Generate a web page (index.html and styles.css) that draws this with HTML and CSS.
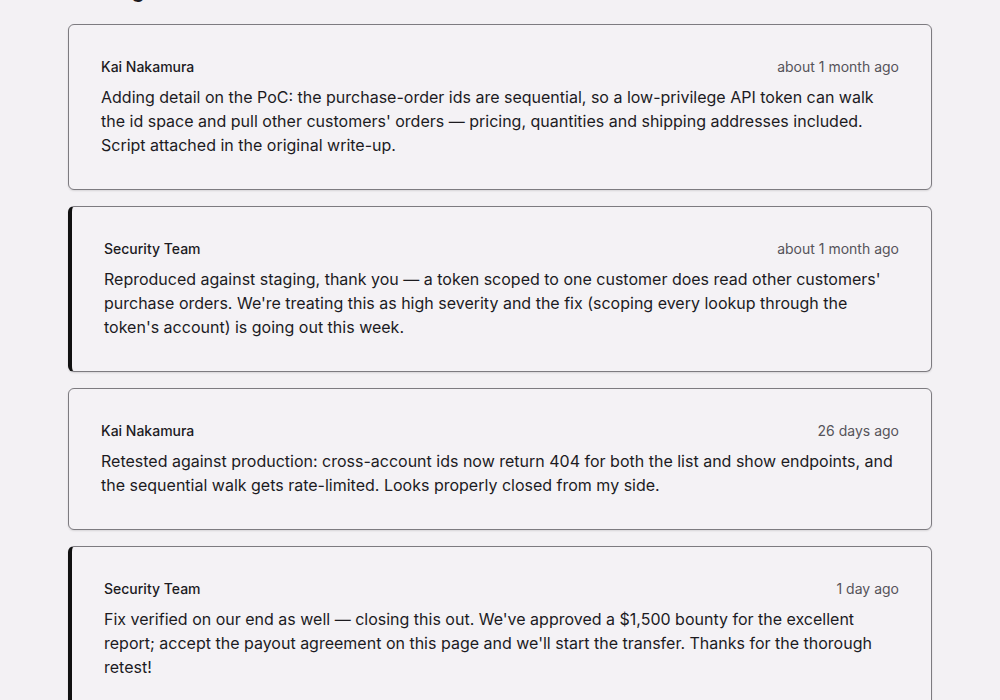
FILE: index.html
```html
<!DOCTYPE html>
<html lang="en">
<head>
    <meta charset="UTF-8">
    <meta name="viewport" content="width=device-width, initial-scale=1.0">
    <title>Report thread</title>
    <link rel="stylesheet" href="styles.css">
</head>
<body>

    <div class="thread">
        <h2 class="thread-title">Messages</h2>

        <div class="comment">
            <div class="comment-head">
                <span class="author">Kai Nakamura</span>
                <span class="time">about 1 month ago</span>
            </div>
            <p class="comment-body">Adding detail on the PoC: the purchase-order ids are sequential, so a low-privilege API token can walk the id space and pull other customers' orders — pricing, quantities and shipping addresses included. Script attached in the original write-up.</p>
        </div>

        <div class="comment staff">
            <div class="comment-head">
                <span class="author">Security Team</span>
                <span class="time">about 1 month ago</span>
            </div>
            <p class="comment-body">Reproduced against staging, thank you — a token scoped to one customer does read other customers' purchase orders. We're treating this as high severity and the fix (scoping every lookup through the token's account) is going out this week.</p>
        </div>

        <div class="comment">
            <div class="comment-head">
                <span class="author">Kai Nakamura</span>
                <span class="time">26 days ago</span>
            </div>
            <p class="comment-body">Retested against production: cross-account ids now return 404 for both the list and show endpoints, and the sequential walk gets rate-limited. Looks properly closed from my side.</p>
        </div>

        <div class="comment staff">
            <div class="comment-head">
                <span class="author">Security Team</span>
                <span class="time">1 day ago</span>
            </div>
            <p class="comment-body">Fix verified on our end as well — closing this out. We've approved a $1,500 bounty for the excellent report; accept the payout agreement on this page and we'll start the transfer. Thanks for the thorough retest!</p>
        </div>
    </div>

</body>
</html>
```

FILE: styles.css
```css
body {
    font-family: 'Inter', 'Liberation Sans', sans-serif;
    background-color: #f3f1f4;
    color: #1c1b1f;
    margin: 0;
}

.thread {
    width: 864px;
    margin: 0 auto;
    display: flex;
    flex-direction: column;
    gap: 16px;
}

/* page is shown scrolled, so only the tail of the heading peeks in */
.thread-title {
    font-size: 20px;
    font-weight: 600;
    line-height: 28px;
    margin: -23px 0 3px;
}

.comment {
    background-color: #f4f2f5;
    border: 1px solid #7d7b80;
    border-radius: 6px;
    padding: 32px;
    box-shadow: 0 1px 2px rgba(0, 0, 0, 0.12);
}

.comment.staff {
    border-left: 4px solid #111;
}

.comment-head {
    display: flex;
    justify-content: space-between;
    align-items: baseline;
    line-height: 20px;
    font-size: 14px;
}

.author {
    font-weight: 500;
    color: #1c1b1f;
}

.time {
    color: #56545a;
}

.comment-body {
    margin: 8px 0 0;
    font-size: 16px;
    line-height: 24px;
}
```
